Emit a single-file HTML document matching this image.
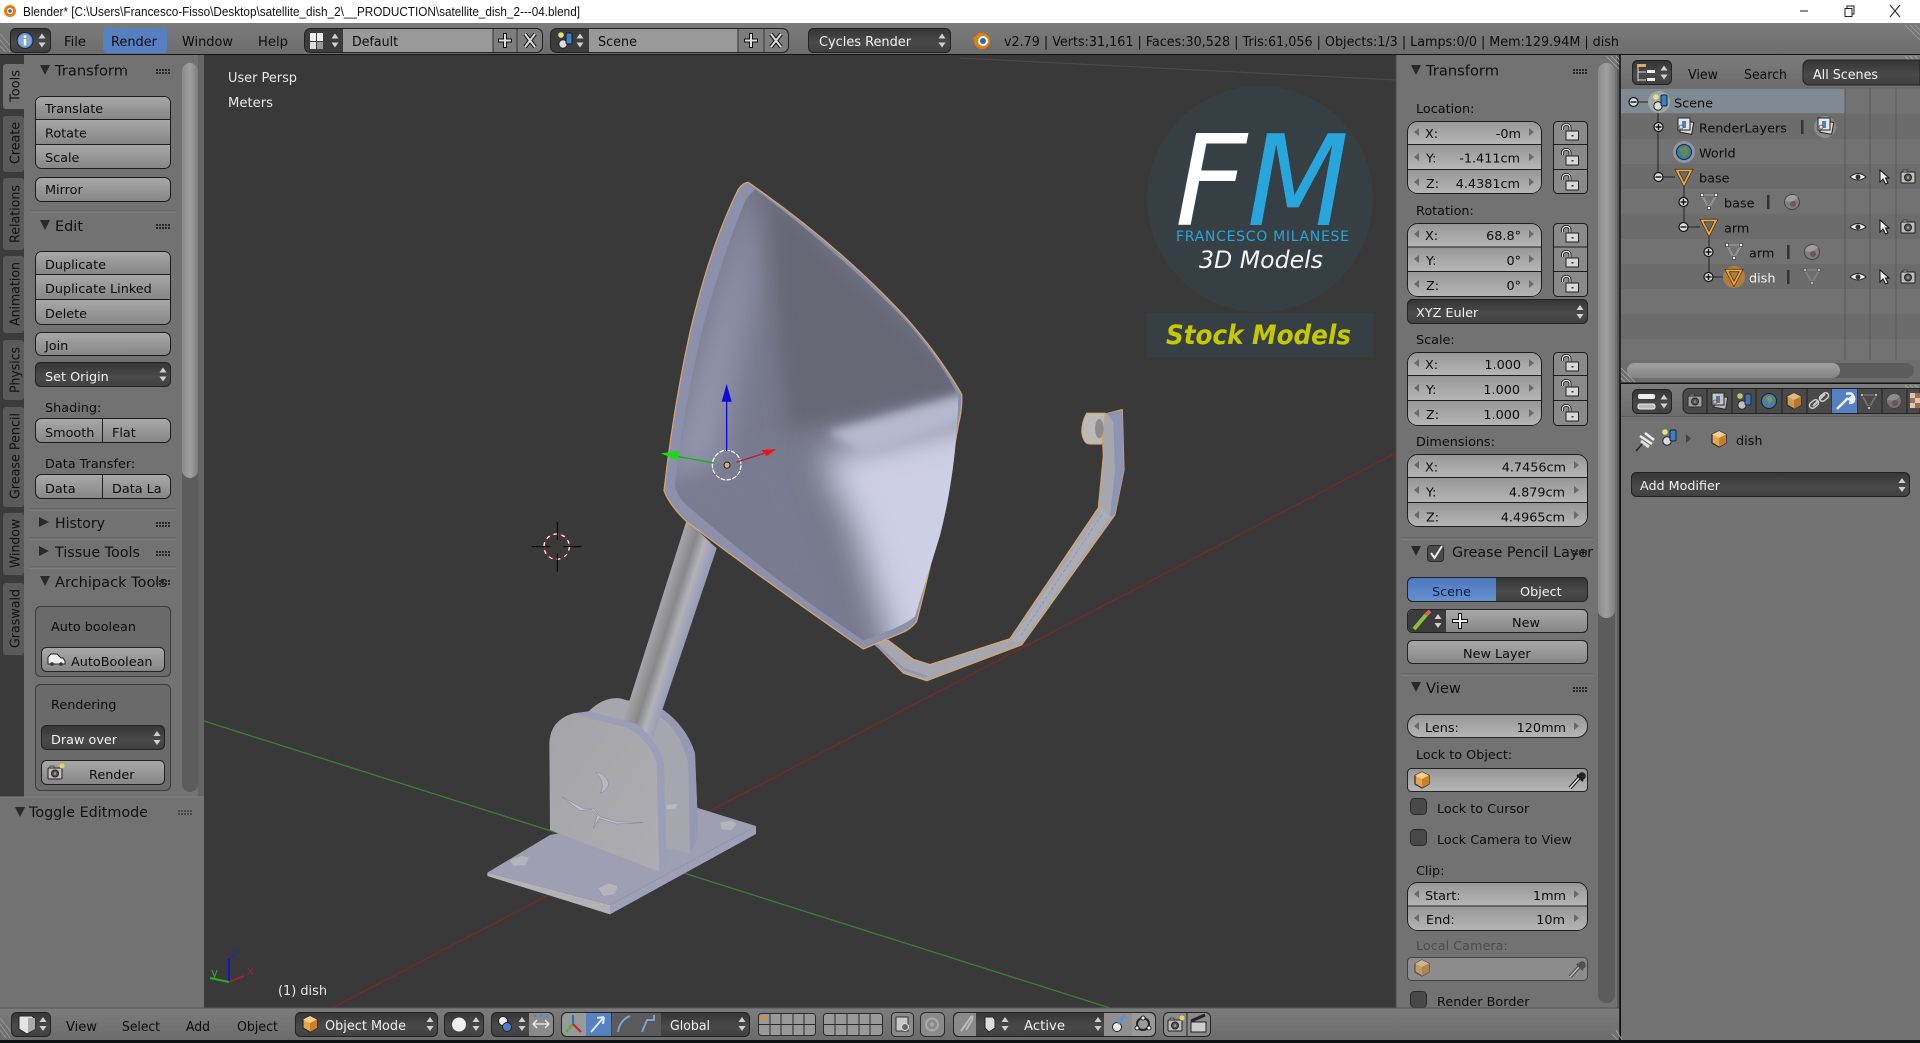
<!DOCTYPE html>
<html><head><meta charset="utf-8"><title>Blender</title>
<style>
html,body{margin:0;padding:0;background:#111;width:1920px;height:1043px;overflow:hidden}
svg{display:block}
text{font-family:"DejaVu Sans","Liberation Sans",sans-serif;font-size:12.8px;fill:#0b0b0b}
.w{fill:#f2f2f2}
.h{font-size:14px;fill:#101010}
.s{font-size:13px}
.tab{font-size:13px;fill:#111}
.g{stroke:#1c1c1c;fill:none}
</style></head><body>
<svg width="1920" height="1043" viewBox="0 0 1920 1043" xmlns="http://www.w3.org/2000/svg">
<defs>
<linearGradient id="b" x1="0" y1="0" x2="0" y2="1"><stop offset="0" stop-color="#a9a9a9"/><stop offset="1" stop-color="#868686"/></linearGradient>
<linearGradient id="n" x1="0" y1="0" x2="0" y2="1"><stop offset="0" stop-color="#969696"/><stop offset="1" stop-color="#b6b6b6"/></linearGradient>
<linearGradient id="d" x1="0" y1="0" x2="0" y2="1"><stop offset="0" stop-color="#353535"/><stop offset=".6" stop-color="#4a4a4a"/><stop offset="1" stop-color="#404040"/></linearGradient>
<linearGradient id="bl" x1="0" y1="0" x2="0" y2="1"><stop offset="0" stop-color="#4d78bd"/><stop offset="1" stop-color="#6490d0"/></linearGradient>
<linearGradient id="hd" x1="0" y1="0" x2="0" y2="1"><stop offset="0" stop-color="#7c7c7c"/><stop offset="1" stop-color="#6c6c6c"/></linearGradient>
<linearGradient id="sb" x1="0" y1="0" x2="1" y2="0"><stop offset="0" stop-color="#8a8a8a"/><stop offset=".5" stop-color="#a0a0a0"/><stop offset="1" stop-color="#7e7e7e"/></linearGradient>
<linearGradient id="sbh" x1="0" y1="0" x2="0" y2="1"><stop offset="0" stop-color="#a2a2a2"/><stop offset="1" stop-color="#848484"/></linearGradient>
<linearGradient id="pole" gradientUnits="userSpaceOnUse" x1="580" y1="365" x2="680" y2="397"><stop offset="0" stop-color="#a8a8ac"/><stop offset=".42" stop-color="#88888a"/><stop offset=".7" stop-color="#b2b2b8"/><stop offset="1" stop-color="#9a9db8"/></linearGradient>
<linearGradient id="plate" x1="0" y1="0" x2="1" y2="1"><stop offset="0" stop-color="#a4a4a8"/><stop offset="1" stop-color="#acacb2"/></linearGradient>
<filter id="f8" filterUnits="userSpaceOnUse" x="-300" y="-300" width="1900" height="2200"><feGaussianBlur stdDeviation="14"/></filter>
<filter id="f15" filterUnits="userSpaceOnUse" x="-300" y="-300" width="1900" height="2200"><feGaussianBlur stdDeviation="32"/></filter>
<filter id="f30" filterUnits="userSpaceOnUse" x="-300" y="-300" width="1900" height="2200"><feGaussianBlur stdDeviation="48"/></filter>
<clipPath id="dishc"><path d="M345 85Q600 270 800 470Q900 580 955 685Q950 900 900 1090L825 1325Q790 1355 670 1395Q400 1220 150 1010Q115 985 105 945Q130 720 190 480Q260 240 320 110Z"/></clipPath>
<clipPath id="c1"><rect x="35" y="96" width="136" height="73" rx="6"/></clipPath>
<clipPath id="c2"><rect x="35" y="251" width="136" height="74" rx="6"/></clipPath>
<clipPath id="c3"><rect x="1407" y="121" width="135" height="73" rx="10"/></clipPath>
<clipPath id="c4"><rect x="1407" y="223" width="135" height="74" rx="10"/></clipPath>
<clipPath id="c5"><rect x="1407" y="352" width="135" height="74" rx="10"/></clipPath>
<clipPath id="c6"><rect x="1407" y="454" width="181" height="73" rx="10"/></clipPath>
<clipPath id="c7"><rect x="1407" y="882" width="181" height="49" rx="10"/></clipPath>
<clipPath id="clipN"><rect x="1396" y="55" width="224" height="953"/></clipPath>
<g id="ud"><path d="M0-7L-3.500-2H3.500Z" fill="#d0d0d0"/><path d="M0 7L-3.500 2H3.500Z" fill="#d0d0d0"/></g>
<g id="grip" fill="#2a2a2a"><rect x="0" y="0" width="2" height="2"/><rect x="3" y="0" width="2" height="2"/><rect x="6" y="0" width="2" height="2"/><rect x="9" y="0" width="2" height="2"/><rect x="12" y="0" width="2" height="2"/><rect x="0" y="3" width="2" height="2"/><rect x="3" y="3" width="2" height="2"/><rect x="6" y="3" width="2" height="2"/><rect x="9" y="3" width="2" height="2"/><rect x="12" y="3" width="2" height="2"/></g>
<g id="lock"><path d="M-7.500-3V-5Q-7.500-8.500-3.500-8.500Q0-8.500 0-5V-2" fill="none" stroke="#111" stroke-width="2.800"/><path d="M-7.500-3V-5Q-7.500-8.500-3.500-8.500Q0-8.500 0-5V-2" fill="none" stroke="#e6e6e6" stroke-width="1.200"/><rect x="-4" y="-2" width="12.500" height="9" fill="#d8d8d8" stroke="#222"/><rect x="1.500" y="2" width="2" height="1.500" fill="#333"/></g>
<path id="al" d="M3-4V4L-2 0Z" fill="#6a6a6a"/>
<path id="ar" d="M-3-4V4L2 0Z" fill="#6a6a6a"/>
<g id="cube"><path d="M0-8L7-4.500V4L0 8L-7 4V-4.500Z" fill="#e8a550" stroke="#2a2a2a" stroke-width="1.200"/><path d="M0-8L7-4.500L0-1L-7-4.500Z" fill="#f6cf90"/><path d="M0-1L7-4.500V4L0 8Z" fill="#c97e28"/></g>
<g id="mesh"><path d="M-7-6H7L0 7Z" fill="none" stroke="#e8e8e8" stroke-width="1.300"/><path d="M-7-6H7L0 7Z" fill="none" stroke="#222" stroke-width=".5"/><rect x="-8.500" y="-7.500" width="3" height="3" fill="#fff" stroke="#222" stroke-width=".6"/><rect x="5.500" y="-7.500" width="3" height="3" fill="#fff" stroke="#222" stroke-width=".6"/><rect x="-1.500" y="5.500" width="3" height="3" fill="#fff" stroke="#222" stroke-width=".6"/></g>
<g id="obj"><path d="M-7-6.500H7L0 7Z" fill="none" stroke="#3a2a10" stroke-width="3.200"/><path d="M-7-6.500H7L0 7Z" fill="none" stroke="#f0a848" stroke-width="1.800"/></g>
<g id="exp"><circle r="4.500" fill="#dcdcdc" stroke="#111" stroke-width="1.200"/><path d="M-3 0H3" stroke="#111" stroke-width="1.400"/></g>
<g id="col"><circle r="4.500" fill="#dcdcdc" stroke="#111" stroke-width="1.200"/><path d="M-3 0H3M0-3V3" stroke="#111" stroke-width="1.400"/></g>
<g id="eye"><path d="M-8 0Q0-7 8 0Q0 6-8 0Z" fill="#eee" stroke="#222" stroke-width="1"/><circle r="2.500" fill="#333"/></g>
<path id="cur" d="M-4-7V5L-1 2L1.500 7L4 6L1.500 1L5 1Z" fill="#f0f0f0" stroke="#111" stroke-width="1"/>
<g id="cam"><rect x="-7" y="-5" width="14" height="11" rx="1" fill="#bdbdbd" stroke="#222"/><rect x="-5" y="-7" width="4" height="2" fill="#999" stroke="#222" stroke-width=".6"/><circle cy=".5" r="3.500" fill="#554" stroke="#222"/><circle cy=".5" r="1.300" fill="#a99"/></g>
<g id="scene"><circle cx="-3" cy="3" r="4.200" fill="#dedede" stroke="#222"/><rect x="0" y="-8" width="6" height="11" rx="1.500" fill="#3f7fc8" stroke="#123"/><circle cx="-5" cy="-6" r="2.800" fill="#e6e080"/></g>
<g id="rl"><rect x="-4" y="-5" width="12" height="12" fill="#d8d8d8" stroke="#222" transform="rotate(10)"/><rect x="-7" y="-8" width="12" height="12" fill="#e6e6e6" stroke="#222"/><rect x="-3" y="-5" width="4" height="7" fill="#4a80c8"/><circle cx="-4" cy="1" r="2" fill="#ddd" stroke="#333" stroke-width=".6"/></g>
<g id="mat"><circle r="7.500" fill="#8a7a7a" stroke="#444"/><path d="M-7-1A7.500 7.500 0 0 1 6-4.500L0 0Z" fill="#9e9e9e"/><circle cx="1" cy="2" r="3" fill="#6a5a5a"/></g>
<g id="drop"><path d="M-8 8L1-2" stroke="#111" stroke-width="3.600"/><path d="M-8 8L1-2" stroke="#e8e8e8" stroke-width="1.600"/><path d="M-1-5L5 1" stroke="#111" stroke-width="2"/><circle cx="4" cy="-4" r="3.800" fill="#222"/></g>
</defs>

<!-- base -->
<rect width="1920" height="1043" fill="#111"/>
<rect width="1920" height="23" fill="#fff"/>
<g transform="translate(10 11)"><circle r="6" fill="#e87d0d"/><circle r="3" fill="#fff"/><circle r="1.800" fill="#2a6bb0"/></g>
<text x="23" y="16" style="font-family:'Liberation Sans',sans-serif;font-size:13px;fill:#111" textLength="557" lengthAdjust="spacingAndGlyphs">Blender* [C:\Users\Francesco-Fisso\Desktop\satellite_dish_2\__PRODUCTION\satellite_dish_2---04.blend]</text>
<path d="M1800 11H1808" stroke="#222"/>
<path d="M1845 8.500h7v8h-7zM1847 8.500V6h7v8h-2" fill="none" stroke="#222"/>
<path d="M1890 5L1900 17M1900 5L1890 17" stroke="#222"/>

<!-- top header -->
<rect y="23" width="1920" height="32" fill="url(#hd)"/>
<rect y="54" width="1920" height="1.500" fill="#141414"/>
<path d="M0 34L14 50M0 40L10 52M0 46L6 52" stroke="#9a9a9a" stroke-width=".8"/>
<path d="M1905 25L1920 40M1910 25L1920 35M1915 25L1920 30" stroke="#9a9a9a" stroke-width=".8"/>
<rect x="10.500" y="28.500" width="40" height="24" rx="5" fill="url(#d)" stroke="#222"/>
<circle cx="25" cy="40.500" r="8" fill="#6f94c4" stroke="#142540"/><circle cx="25" cy="40.500" r="6" fill="#86a8d2"/><rect x="23.800" y="39" width="2.400" height="6.500" fill="#fff"/><rect x="23.800" y="35.500" width="2.400" height="2.200" fill="#fff"/>
<use href="#ud" x="42" y="40.500"/>
<text x="64" y="46" class="s" textLength="22" lengthAdjust="spacingAndGlyphs">File</text>
<rect x="103" y="28" width="64" height="25" rx="4" fill="#5680c2"/>
<text x="111" y="46" class="s" textLength="46" lengthAdjust="spacingAndGlyphs">Render</text>
<text x="182" y="46" class="s" textLength="51" lengthAdjust="spacingAndGlyphs">Window</text>
<text x="258" y="46" class="s" textLength="30" lengthAdjust="spacingAndGlyphs">Help</text>

<rect x="304.500" y="28.500" width="238" height="24" rx="6" fill="#3c3c3c" stroke="#222"/>
<rect x="343" y="29" width="150" height="23" fill="#999"/>
<rect x="493" y="29" width="24" height="23" fill="#7d7d7d"/><path d="M517 29h19a6 6 0 0 1 6 6v11a6 6 0 0 1-6 6h-19z" fill="#7d7d7d"/>
<path d="M493 29V52M517 29V52" stroke="#333"/>
<rect x="310" y="33" width="6" height="8" fill="#eee"/><rect x="317" y="33" width="6" height="8" fill="#eee"/><rect x="310" y="42" width="6" height="7" fill="#ddd"/><rect x="317" y="42" width="6" height="7" fill="#999"/>
<use href="#ud" x="335" y="40.500"/>
<text x="352" y="46" class="s" textLength="46" lengthAdjust="spacingAndGlyphs">Default</text>
<path d="M505 33V48M498 40.500H512" stroke="#111" stroke-width="4"/><path d="M505 34V47M499 40.500H511" stroke="#ddd" stroke-width="2"/>
<path d="M525 34L535 47M535 34L525 47" stroke="#111" stroke-width="4"/><path d="M525 34L535 47M535 34L525 47" stroke="#ddd" stroke-width="2"/>

<rect x="550.500" y="28.500" width="238" height="24" rx="6" fill="#3c3c3c" stroke="#222"/>
<rect x="589" y="29" width="149" height="23" fill="#999"/>
<rect x="738" y="29" width="26" height="23" fill="#7d7d7d"/><path d="M764 29h18a6 6 0 0 1 6 6v11a6 6 0 0 1-6 6h-18z" fill="#7d7d7d"/>
<path d="M738 29V52M764 29V52" stroke="#333"/>
<use href="#scene" x="566" y="41"/><use href="#ud" x="580" y="40.500"/>
<text x="598" y="46" class="s" textLength="39" lengthAdjust="spacingAndGlyphs">Scene</text>
<path d="M751 33V48M744 40.500H758" stroke="#111" stroke-width="4"/><path d="M751 34V47M745 40.500H757" stroke="#ddd" stroke-width="2"/>
<path d="M771 34L781 47M781 34L771 47" stroke="#111" stroke-width="4"/><path d="M771 34L781 47M781 34L771 47" stroke="#ddd" stroke-width="2"/>

<rect x="808.500" y="28.500" width="142" height="24" rx="5" fill="url(#d)" stroke="#222"/>
<text x="819" y="46" class="w s" textLength="92" lengthAdjust="spacingAndGlyphs">Cycles Render</text>
<use href="#ud" x="942" y="40.500"/>

<g transform="translate(982 41)"><circle r="8" fill="#e87d0d"/><path d="M-11-1L-3-8L-1-9L-4-4Z" fill="#e87d0d"/><circle cx="1" r="5" fill="#fff"/><circle cx="1" r="3" fill="#2a6bb0"/></g>
<text x="1004" y="46" class="s" textLength="615" lengthAdjust="spacingAndGlyphs">v2.79 | Verts:31,161 | Faces:30,528 | Tris:61,056 | Objects:1/3 | Lamps:0/0 | Mem:129.94M | dish</text>

<!-- viewport -->
<rect x="204" y="55" width="1192" height="953" fill="#393939"/>
<path d="M960 58L1396 80" stroke="#4c4c4c"/>
<path d="M204 721L1110 1008" stroke="#3f7a3f" stroke-width="1.300"/>
<path d="M1396 453L332 1008" stroke="#6b2d2d" stroke-width="1.600"/>

<!-- logo -->
<circle cx="1260" cy="199" r="113" fill="#364044"/>
<rect x="1147" y="313" width="226" height="44" fill="#364044"/>
<text x="1175" y="225" style="font-size:126px;font-style:italic;fill:#fff" textLength="72" lengthAdjust="spacingAndGlyphs">F</text>
<text x="1247" y="225" style="font-size:126px;font-style:italic;fill:#27a5dc" textLength="102" lengthAdjust="spacingAndGlyphs">M</text>
<text x="1176" y="241" style="font-size:14px;fill:#27a5dc" textLength="173">FRANCESCO MILANESE</text>
<text x="1199" y="268" style="font-size:24px;font-style:italic;fill:#f4f4f4" textLength="124" lengthAdjust="spacingAndGlyphs">3D Models</text>
<text x="1166" y="344" style="font-size:27px;font-style:italic;font-weight:bold;fill:#c8c800" textLength="185" lengthAdjust="spacingAndGlyphs">Stock Models</text>

<text x="228" y="82" class="w s" style="fill:#e8e8e8" textLength="69" lengthAdjust="spacingAndGlyphs">User Persp</text>
<text x="228" y="107" class="w s" style="fill:#e8e8e8" textLength="45" lengthAdjust="spacingAndGlyphs">Meters</text>
<text x="278" y="995" class="w s" style="fill:#e8e8e8" textLength="49" lengthAdjust="spacingAndGlyphs">(1) dish</text>

<!-- axis gizmo -->
<path d="M229 982V958" stroke="#1414c8" stroke-width="2"/>
<path d="M229 982L244 976" stroke="#a82030" stroke-width="2"/>
<path d="M229 982L210 978" stroke="#20b020" stroke-width="2"/>
<text x="231" y="958" style="font-size:12px;fill:#1c2cb0">z</text>
<text x="247" y="975" style="font-size:12px;fill:#a02030">x</text>
<text x="211" y="977" style="font-size:12px;fill:#40a040">y</text>

<!-- 3D cursor + mount -->
<g transform="translate(460 500) scale(.33333)">
<circle cx="290" cy="140" r="38" fill="none" stroke="#fff" stroke-width="4" stroke-dasharray="12 12"/>
<circle cx="290" cy="140" r="38" fill="none" stroke="#9a1a2a" stroke-width="4" stroke-dasharray="12 12" stroke-dashoffset="12"/>
<path d="M215 140H270M310 140H365M292 65V120M292 160V215" stroke="#000" stroke-width="3"/>

<path d="M82 1118L270 1005L700 920L888 978L450 1215Z" fill="#9e9fb2"/>
<path d="M82 1118L450 1215V1243L82 1128Z" fill="#b2b2b8"/>
<path d="M450 1215L888 978V1002L450 1243Z" fill="#9ea0b8"/>
<path d="M150 1080L185 1068L207 1072L195 1095L160 1098Z" fill="#b4b4ba"/>
<path d="M780 968L815 962L830 972L815 990L785 988Z" fill="#b4b4ba"/>
<path d="M415 1165L445 1150L472 1158L465 1182L430 1188Z" fill="#b4b4ba"/>
<!-- back plate -->
<path d="M385 635Q430 590 480 595L610 630Q680 680 705 760L715 1010L690 1060L560 1030L560 700Z" fill="#a6a6ae"/>
<path d="M610 630Q680 680 705 760L715 1010L690 1060L685 790Q660 690 600 650Z" fill="#9698b4"/>
<path d="M618 915L650 912L648 925L620 928Z" fill="#b9b9c2"/>
<!-- pole -->
<path d="M680 60L770 145L580 710L490 660Z" fill="url(#pole)"/>
<!-- front plate -->
<path d="M268 730Q270 660 340 640L360 638L500 680Q570 720 590 790L598 1115L270 990Z" fill="url(#plate)"/>
<path d="M340 640L385 634L530 672Q600 730 612 790L620 1095L598 1115L590 790Q570 720 500 682L360 648Z" fill="#9c9eb8"/>
<path d="M408 818Q432 815 447 850Q440 875 420 880Q438 850 408 818Z" fill="#b8b8c2" stroke="#808090" stroke-width="1.500"/>
<path d="M305 890L360 932L395 928L412 945L400 985L418 955L470 972L550 968L470 965L420 950L400 925L370 925Z" fill="#bdbdc6" stroke="#858595" stroke-width="1.500"/>
</g>

<!-- arm and dish -->
<g transform="translate(640 160) scale(.33333 .34439)">
<path d="M700 1400L790 1490L860 1512L1145 1408L1425 1030L1452 900L1447 725L1385 740L1390 860L1375 1010L1110 1390L870 1465L820 1450L745 1395Z" fill="#a6a7ae" stroke="#d9a468" stroke-width="3.500"/>
<path d="M1400 735L1447 727L1452 900L1425 1030L1410 1035L1425 900L1420 760Z" fill="#9094b2"/>
<path d="M1390 1010L1410 1035L1145 1400L1115 1395Z" fill="#aaacb6"/>
<path d="M1385 1030L1140 1385" stroke="#8c96b4" stroke-width="2.500" stroke-dasharray="10 6"/>
<path d="M1340 735Q1325 760 1325 790Q1330 825 1350 825L1385 825L1395 735Z" fill="#bcbab6" stroke="#d9a468" stroke-width="3"/>
<ellipse cx="1378" cy="780" rx="13" ry="28" fill="#8c8c90"/>
<path d="M700 1400L790 1478L860 1500" fill="none" stroke="#9397ae" stroke-width="8"/>
<path d="M325 65Q600 250 800 460Q900 570 965 680Q968 720 955 770Q900 1080 830 1340Q810 1365 780 1375L670 1420Q400 1240 140 1050Q90 1005 72 960Q100 720 150 500Q210 250 295 85Q310 65 325 65Z" fill="#8d90ab" stroke="#dba768" stroke-width="3.500"/>
<g clip-path="url(#dishc)">
<rect x="0" y="0" width="1100" height="1500" fill="#77798c"/>
<path d="M345 40L1030 680L440 790L400 420Z" fill="#666876" filter="url(#f15)"/>
<path d="M345 60L60 950L230 900L330 380Z" fill="#9496ae" filter="url(#f30)"/>
<path d="M420 820L590 1300L650 1420L130 1030L90 950L260 900Z" fill="#797b91" filter="url(#f15)"/>
<path d="M540 860L1150 720L1150 1550L800 1550L640 1060Z" fill="#cdcfe4" filter="url(#f30)"/>
<path d="M560 790L985 675L985 755L680 860Z" fill="#b6b8ce" filter="url(#f8)"/>
</g>
<!-- gizmo -->
<circle cx="260" cy="886" r="43" fill="none" stroke="#fff" stroke-width="3.500" stroke-dasharray="14 4"/>
<circle cx="261" cy="886" r="9" fill="#d8a878" stroke="#222" stroke-width="3"/>
<path d="M260 845V700" stroke="#0c0cd8" stroke-width="4"/>
<path d="M260 650L245 702H275Z" fill="#0c0cd8"/>
<path d="M290 877L372 852" stroke="#b82040" stroke-width="4"/>
<path d="M365 842L408 840L380 860Z" fill="#f01010"/>
<path d="M220 880L110 860" stroke="#18b018" stroke-width="4"/>
<path d="M62 852L115 845V872Z" fill="#12e012"/>
</g>

<!-- T panel -->
<rect x="0" y="55" width="204" height="743" fill="#727272"/>
<rect x="0" y="55" width="24" height="743" fill="#3b3b3b"/>
<rect x="198" y="55" width="6" height="743" fill="#656565"/>
<rect x="3" y="116" width="21" height="56" rx="3" fill="#5a5a5a"/>
<rect x="3" y="178" width="21" height="72" rx="3" fill="#5a5a5a"/>
<rect x="3" y="256" width="21" height="77" rx="3" fill="#5a5a5a"/>
<rect x="3" y="340" width="21" height="60" rx="3" fill="#5a5a5a"/>
<rect x="3" y="407" width="21" height="100" rx="3" fill="#5a5a5a"/>
<rect x="3" y="513" width="21" height="62" rx="3" fill="#5a5a5a"/>
<rect x="3" y="583" width="21" height="72" rx="3" fill="#5a5a5a"/>
<rect x="3" y="64" width="24" height="45" rx="3" fill="#727272"/>
<text class="tab" transform="translate(19.500 102) rotate(-90)" textLength="32" lengthAdjust="spacingAndGlyphs">Tools</text>
<text class="tab" transform="translate(19.500 164) rotate(-90)" textLength="42" lengthAdjust="spacingAndGlyphs">Create</text>
<text class="tab" transform="translate(19.500 243) rotate(-90)" textLength="58" lengthAdjust="spacingAndGlyphs">Relations</text>
<text class="tab" transform="translate(19.500 326) rotate(-90)" textLength="64" lengthAdjust="spacingAndGlyphs">Animation</text>
<text class="tab" transform="translate(19.500 393) rotate(-90)" textLength="46" lengthAdjust="spacingAndGlyphs">Physics</text>
<text class="tab" transform="translate(19.500 499) rotate(-90)" textLength="86" lengthAdjust="spacingAndGlyphs">Grease Pencil</text>
<text class="tab" transform="translate(19.500 568) rotate(-90)" textLength="49" lengthAdjust="spacingAndGlyphs">Window</text>
<text class="tab" transform="translate(19.500 648) rotate(-90)" textLength="59" lengthAdjust="spacingAndGlyphs">Graswald</text>
<rect x="182" y="63" width="16" height="729" rx="8" fill="#5c5c5c"/>
<rect x="182" y="63" width="16" height="415" rx="8" fill="url(#sb)"/>
<path d="M40 65L50 65L45 75Z" fill="#2a2a2a"/><text x="55" y="75.500" class="h" textLength="73" lengthAdjust="spacingAndGlyphs">Transform</text><use href="#grip" x="156" y="69"/>
<g clip-path="url(#c1)"><rect x="35" y="96" width="136" height="23" fill="url(#b)"/><rect x="35" y="119" width="136" height="25" fill="url(#b)"/><rect x="35" y="144" width="136" height="25" fill="url(#b)"/></g>
<rect x="35.500" y="96.500" width="135" height="72" rx="6" class="g"/><path d="M36 119.500H170M36 144.500H170" stroke="#1c1c1c"/>
<text x="45" y="113">Translate</text><text x="45" y="137.500">Rotate</text><text x="45" y="162">Scale</text>
<rect x="35.500" y="177.500" width="135" height="24" rx="6" fill="url(#b)" stroke="#1c1c1c"/><text x="45" y="194">Mirror</text>
<path d="M30 211H176" stroke="#5a5a5a"/><path d="M30 212H176" stroke="#858585"/>
<path d="M40 220L50 220L45 230Z" fill="#2a2a2a"/><text x="55" y="231" class="h" textLength="28" lengthAdjust="spacingAndGlyphs">Edit</text><use href="#grip" x="156" y="224"/>
<g clip-path="url(#c2)"><rect x="35" y="251" width="136" height="23" fill="url(#b)"/><rect x="35" y="274" width="136" height="25" fill="url(#b)"/><rect x="35" y="299" width="136" height="26" fill="url(#b)"/></g>
<rect x="35.500" y="251.500" width="135" height="73" rx="6" class="g"/><path d="M36 274.500H170M36 299.500H170" stroke="#1c1c1c"/>
<text x="45" y="269">Duplicate</text><text x="45" y="293">Duplicate Linked</text><text x="45" y="318">Delete</text>
<rect x="35.500" y="332.500" width="135" height="23" rx="6" fill="url(#b)" stroke="#1c1c1c"/><text x="45" y="350">Join</text>
<rect x="35.500" y="362.500" width="135" height="24" rx="5" fill="url(#d)" stroke="#222"/><text x="45" y="381" class="w">Set Origin</text><use href="#ud" x="163" y="374.500"/>
<text x="45" y="412">Shading:</text>
<rect x="35.500" y="418.500" width="135" height="24" rx="6" fill="url(#b)" stroke="#1c1c1c"/><path d="M102.500 419V442" stroke="#1c1c1c"/><text x="45" y="437">Smooth</text><text x="112" y="437">Flat</text>
<text x="45" y="468">Data Transfer:</text>
<rect x="35.500" y="474.500" width="135" height="24" rx="6" fill="url(#b)" stroke="#1c1c1c"/><path d="M102.500 475V498" stroke="#1c1c1c"/><text x="45" y="493">Data</text><text x="112" y="493">Data La</text>
<path d="M30 509H176" stroke="#5a5a5a"/><path d="M30 510H176" stroke="#858585"/>
<path d="M39 517L49 522L39 527Z" fill="#2a2a2a"/><text x="55" y="528" class="h" textLength="50" lengthAdjust="spacingAndGlyphs">History</text><use href="#grip" x="156" y="522"/>
<path d="M30 538H176" stroke="#5a5a5a"/><path d="M30 539H176" stroke="#858585"/>
<path d="M39 546L49 551L39 556Z" fill="#2a2a2a"/><text x="55" y="557" class="h" textLength="85" lengthAdjust="spacingAndGlyphs">Tissue Tools</text><use href="#grip" x="156" y="551"/>
<path d="M30 567H176" stroke="#5a5a5a"/><path d="M30 568H176" stroke="#858585"/>
<path d="M40 576L50 576L45 586Z" fill="#2a2a2a"/><text x="55" y="587" class="h" textLength="112" lengthAdjust="spacingAndGlyphs">Archipack Tools</text><use href="#grip" x="156" y="580"/>
<rect x="35.500" y="606.500" width="135" height="70" rx="5" fill="#6a6a6a" stroke="#3c3c3c"/>
<text x="51" y="631">Auto boolean</text>
<rect x="41.500" y="647.500" width="123" height="24" rx="5" fill="url(#b)" stroke="#222"/>
<path d="M48 664V657L51 654H57L61 658H63L65 661V664Z" fill="#eee" stroke="#222"/><circle cx="52" cy="664" r="1.800" fill="#333"/><circle cx="61" cy="664" r="1.800" fill="#333"/>
<text x="71" y="666">AutoBoolean</text>
<rect x="35.500" y="684.500" width="135" height="106" rx="5" fill="#6a6a6a" stroke="#3c3c3c"/>
<text x="51" y="709">Rendering</text>
<rect x="41.500" y="725.500" width="123" height="24" rx="5" fill="url(#d)" stroke="#222"/><text x="51" y="744" class="w">Draw over</text><use href="#ud" x="157" y="738"/>
<rect x="41.500" y="760.500" width="123" height="24" rx="5" fill="url(#b)" stroke="#222"/>
<use href="#cam" x="55" y="773"/><circle cx="62" cy="766" r="2.500" fill="#eed25a"/>
<text x="89" y="779">Render</text>
<rect x="0" y="797" width="204" height="212" fill="#727272"/>
<path d="M0 797H204" stroke="#7e7e7e"/>
<path d="M15 807L25 807L20 817Z" fill="#2a2a2a"/><text x="29" y="817" class="h" textLength="119" lengthAdjust="spacingAndGlyphs">Toggle Editmode</text>
<use href="#grip" x="178" y="810" opacity=".55"/>

<!-- N panel -->
<rect x="1396" y="55" width="224" height="953" fill="#727272"/>
<path d="M1396 55V1008" stroke="#4a4a4a"/>
<rect x="1617" y="55" width="3" height="953" fill="#5c5c5c"/>
<rect x="1598" y="63" width="17" height="940" rx="8" fill="#5c5c5c"/>
<rect x="1598" y="63" width="17" height="555" rx="8" fill="url(#sb)"/>
<path d="M1606 56L1620 70M1611 56L1620 65M1616 56L1620 60" stroke="#aaa" stroke-width=".8"/>
<g clip-path="url(#clipN)">
<path d="M1411 65L1421 65L1416 75Z" fill="#2a2a2a"/><text x="1426" y="75.500" class="h" textLength="73" lengthAdjust="spacingAndGlyphs">Transform</text><use href="#grip" x="1573" y="69"/>
<text x="1416" y="113">Location:</text>
<g clip-path="url(#c3)"><rect x="1407" y="121" width="135" height="23" fill="url(#n)"/><rect x="1407" y="144" width="135" height="25" fill="url(#n)"/><rect x="1407" y="169" width="135" height="25" fill="url(#n)"/></g>
<rect x="1407.500" y="121.500" width="134" height="72" rx="10" class="g"/><path d="M1408 144.500H1541M1408 169.500H1541" stroke="#1c1c1c"/>
<use href="#al" x="1416" y="132"/><use href="#ar" x="1532" y="132"/><use href="#al" x="1416" y="157"/><use href="#ar" x="1532" y="157"/><use href="#al" x="1416" y="182"/><use href="#ar" x="1532" y="182"/>
<text x="1425" y="138">X:</text><text x="1521" y="138" text-anchor="end">-0m</text>
<text x="1426" y="162.500">Y:</text><text x="1520" y="162.500" text-anchor="end">-1.411cm</text>
<text x="1426" y="188">Z:</text><text x="1520" y="188" text-anchor="end">4.4381cm</text>
<rect x="1553.500" y="121.500" width="34" height="72" rx="4" fill="#8a8a8a" stroke="#1c1c1c"/><path d="M1554 144.500H1587M1554 169.500H1587" stroke="#1c1c1c"/>
<use href="#lock" x="1570" y="133"/><use href="#lock" x="1570" y="158"/><use href="#lock" x="1570" y="183"/>

<text x="1416" y="215">Rotation:</text>
<g clip-path="url(#c4)"><rect x="1407" y="223" width="135" height="24" fill="url(#n)"/><rect x="1407" y="247" width="135" height="24" fill="url(#n)"/><rect x="1407" y="271" width="135" height="26" fill="url(#n)"/></g>
<rect x="1407.500" y="223.500" width="134" height="73" rx="10" class="g"/><path d="M1408 247H1541M1408 271.500H1541" stroke="#1c1c1c"/>
<use href="#al" x="1416" y="234"/><use href="#ar" x="1532" y="234"/><use href="#al" x="1416" y="259"/><use href="#ar" x="1532" y="259"/><use href="#al" x="1416" y="284"/><use href="#ar" x="1532" y="284"/>
<text x="1425" y="240">X:</text><text x="1521" y="240" text-anchor="end">68.8°</text>
<text x="1426" y="265">Y:</text><text x="1521" y="265" text-anchor="end">0°</text>
<text x="1426" y="290">Z:</text><text x="1521" y="290" text-anchor="end">0°</text>
<rect x="1553.500" y="223.500" width="34" height="73" rx="4" fill="#8a8a8a" stroke="#1c1c1c"/><path d="M1554 247H1587M1554 271.500H1587" stroke="#1c1c1c"/>
<use href="#lock" x="1570" y="235"/><use href="#lock" x="1570" y="260"/><use href="#lock" x="1570" y="285"/>
<rect x="1407.500" y="299.500" width="180" height="24" rx="5" fill="url(#d)" stroke="#222"/><text x="1416" y="317" class="w">XYZ Euler</text><use href="#ud" x="1580" y="312"/>

<text x="1416" y="344">Scale:</text>
<g clip-path="url(#c5)"><rect x="1407" y="352" width="135" height="23" fill="url(#n)"/><rect x="1407" y="375" width="135" height="25" fill="url(#n)"/><rect x="1407" y="400" width="135" height="26" fill="url(#n)"/></g>
<rect x="1407.500" y="352.500" width="134" height="73" rx="10" class="g"/><path d="M1408 375.500H1541M1408 400.500H1541" stroke="#1c1c1c"/>
<use href="#al" x="1416" y="363"/><use href="#ar" x="1532" y="363"/><use href="#al" x="1416" y="388"/><use href="#ar" x="1532" y="388"/><use href="#al" x="1416" y="413"/><use href="#ar" x="1532" y="413"/>
<text x="1425" y="369">X:</text><text x="1521" y="369" text-anchor="end">1.000</text>
<text x="1426" y="394">Y:</text><text x="1520" y="394" text-anchor="end">1.000</text>
<text x="1426" y="419">Z:</text><text x="1520" y="419" text-anchor="end">1.000</text>
<rect x="1553.500" y="352.500" width="34" height="73" rx="4" fill="#8a8a8a" stroke="#1c1c1c"/><path d="M1554 375.500H1587M1554 400.500H1587" stroke="#1c1c1c"/>
<use href="#lock" x="1570" y="364"/><use href="#lock" x="1570" y="389"/><use href="#lock" x="1570" y="414"/>

<text x="1416" y="446">Dimensions:</text>
<g clip-path="url(#c6)"><rect x="1407" y="454" width="181" height="23" fill="url(#n)"/><rect x="1407" y="477" width="181" height="26" fill="url(#n)"/><rect x="1407" y="503" width="181" height="24" fill="url(#n)"/></g>
<rect x="1407.500" y="454.500" width="180" height="72" rx="10" class="g"/><path d="M1408 477.500H1587M1408 502.500H1587" stroke="#1c1c1c"/>
<use href="#al" x="1416" y="465"/><use href="#ar" x="1577" y="465"/><use href="#al" x="1416" y="490"/><use href="#ar" x="1577" y="490"/><use href="#al" x="1416" y="515"/><use href="#ar" x="1577" y="515"/>
<text x="1425" y="471.500">X:</text><text x="1566" y="471.500" text-anchor="end">4.7456cm</text>
<text x="1426" y="496.500">Y:</text><text x="1565" y="496.500" text-anchor="end">4.879cm</text>
<text x="1426" y="521.500">Z:</text><text x="1565" y="521.500" text-anchor="end">4.4965cm</text>
<path d="M1401 538H1593" stroke="#5a5a5a"/><path d="M1401 539H1593" stroke="#858585"/>

<path d="M1411 546L1421 546L1416 556Z" fill="#2a2a2a"/>
<rect x="1427.500" y="545.500" width="16" height="16" rx="3" fill="#4a4a4a" stroke="#2a2a2a"/><path d="M1431 553L1434.500 558L1442 546" fill="none" stroke="#eee" stroke-width="2"/>
<text x="1452" y="557" class="h" textLength="141" lengthAdjust="spacingAndGlyphs">Grease Pencil Layer</text><use href="#grip" x="1573" y="550"/>
<rect x="1407.500" y="577.500" width="180" height="24" rx="5" fill="url(#d)" stroke="#222"/>
<path d="M1496 578H1413a5 5 0 0 0-5 5v13a5 5 0 0 0 5 5h83z" fill="url(#bl)"/>
<text x="1432" y="596" style="fill:#071c3a">Scene</text><text x="1520" y="596" class="w">Object</text>
<rect x="1407.500" y="609.500" width="180" height="23" rx="5" fill="url(#b)" stroke="#222"/>
<path d="M1446 610H1413a5 5 0 0 0-5 5v12a5 5 0 0 0 5 5h33z" fill="#3c3c3c"/>
<path d="M1414 629L1426 615" stroke="#8abf3a" stroke-width="4"/><path d="M1426 615L1430 611" stroke="#e06060" stroke-width="4"/><use href="#ud" x="1438" y="621"/>
<path d="M1460 613V629M1452 621H1468" stroke="#111" stroke-width="4"/><path d="M1460 614V628M1453 621H1467" stroke="#eee" stroke-width="2"/>
<text x="1512" y="627">New</text>
<rect x="1407.500" y="640.500" width="180" height="23" rx="5" fill="url(#b)" stroke="#222"/><text x="1463" y="658">New Layer</text>
<path d="M1401 674H1593" stroke="#5a5a5a"/><path d="M1401 675H1593" stroke="#858585"/>
<path d="M1411 682L1421 682L1416 692Z" fill="#2a2a2a"/><text x="1426" y="693" class="h" textLength="35" lengthAdjust="spacingAndGlyphs">View</text><use href="#grip" x="1573" y="687"/>
<rect x="1407.500" y="714.500" width="180" height="23" rx="11" fill="url(#n)" stroke="#222"/>
<use href="#al" x="1416" y="726"/><use href="#ar" x="1577" y="726"/>
<text x="1425" y="732">Lens:</text><text x="1566" y="732" text-anchor="end">120mm</text>
<text x="1416" y="759">Lock to Object:</text>
<rect x="1407.500" y="768.500" width="180" height="23" rx="4" fill="url(#n)" stroke="#222"/>
<use href="#cube" x="1422" y="780"/>
<use href="#drop" x="1578" y="780"/>
<rect x="1410.500" y="798.500" width="16" height="16" rx="4" fill="#484848" stroke="#2a2a2a"/><text x="1437" y="813">Lock to Cursor</text>
<rect x="1410.500" y="829.500" width="16" height="16" rx="4" fill="#484848" stroke="#2a2a2a"/><text x="1437" y="844">Lock Camera to View</text>
<text x="1416" y="875">Clip:</text>
<g clip-path="url(#c7)"><rect x="1407" y="882" width="181" height="24" fill="url(#n)"/><rect x="1407" y="906" width="181" height="25" fill="url(#n)"/></g>
<rect x="1407.500" y="882.500" width="180" height="48" rx="10" class="g"/><path d="M1408 906H1587" stroke="#1c1c1c"/>
<use href="#al" x="1416" y="894"/><use href="#ar" x="1577" y="894"/><use href="#al" x="1416" y="918"/><use href="#ar" x="1577" y="918"/>
<text x="1425" y="900">Start:</text><text x="1566" y="900" text-anchor="end">1mm</text>
<text x="1426" y="924">End:</text><text x="1565" y="924" text-anchor="end">10m</text>
<text x="1416" y="950" style="fill:#4c4c4c">Local Camera:</text>
<rect x="1407.500" y="957.500" width="180" height="23" rx="4" fill="#8c8c8c" stroke="#444"/>
<use href="#cube" x="1422" y="968" opacity=".6"/>
<use href="#drop" x="1578" y="969" opacity=".55"/>
<rect x="1410.500" y="991.500" width="16" height="16" rx="4" fill="#484848" stroke="#2a2a2a"/><text x="1437" y="1006">Render Border</text>
</g>

<!-- bottom header -->
<rect x="0" y="1008" width="1620" height="32" fill="url(#hd)"/>
<path d="M0 1008H1620" stroke="#555"/>
<path d="M0 1018L14 1036M0 1024L10 1038M0 1030L6 1038" stroke="#9a9a9a" stroke-width=".8"/>
<rect x="11.500" y="1012.500" width="39" height="24" rx="5" fill="url(#d)" stroke="#222"/>
<path d="M19 1016L32 1016L35 1019V1029L27 1034L19 1029Z" fill="#e4e4e4" stroke="#222"/><path d="M28 1018L35 1018V1029L28 1033Z" fill="#aaa"/><use href="#ud" x="43" y="1024"/>
<text x="66" y="1031" class="s" textLength="31" lengthAdjust="spacingAndGlyphs">View</text>
<text x="122" y="1031" class="s" textLength="38" lengthAdjust="spacingAndGlyphs">Select</text>
<text x="186" y="1031" class="s" textLength="24" lengthAdjust="spacingAndGlyphs">Add</text>
<text x="237" y="1031" class="s" textLength="41" lengthAdjust="spacingAndGlyphs">Object</text>
<rect x="295.500" y="1012.500" width="142" height="24" rx="5" fill="url(#d)" stroke="#222"/>
<use href="#cube" x="310" y="1024"/><text x="325" y="1030" class="w s" textLength="81" lengthAdjust="spacingAndGlyphs">Object Mode</text><use href="#ud" x="430" y="1024"/>
<rect x="444.500" y="1012.500" width="39" height="24" rx="5" fill="url(#d)" stroke="#222"/><circle cx="459" cy="1024.500" r="7" fill="#f0f0f0"/><use href="#ud" x="476" y="1024"/>
<rect x="491.500" y="1012.500" width="62" height="24" rx="5" fill="url(#d)" stroke="#222"/>
<path d="M529 1013h19a5 5 0 0 1 5 5v13a5 5 0 0 1-5 5h-19z" fill="#8a8a8a"/>
<circle cx="503" cy="1021" r="4.500" fill="#eee" stroke="#222"/><circle cx="507" cy="1027" r="4.500" fill="#4a80c8" stroke="#222"/><use href="#ud" x="522" y="1024"/>
<path d="M533 1024H549M533 1024L537 1020M533 1024L537 1028M549 1024L545 1020M549 1024L545 1028" stroke="#eee" fill="none" stroke-width="1.300"/>
<circle cx="535" cy="1016" r="1.300" fill="#5a80c0"/><circle cx="541" cy="1016" r="1.300" fill="#5a80c0"/><circle cx="547" cy="1016" r="1.300" fill="#5a80c0"/>
<rect x="561.500" y="1012.500" width="188" height="24" rx="5" fill="url(#d)" stroke="#222"/>
<path d="M562 1018a5 5 0 0 1 5-5h19v23h-19a5 5 0 0 1-5-5z" fill="#999"/>
<rect x="586" y="1013" width="25" height="23" fill="#5680c2"/><rect x="612" y="1013" width="24" height="23" fill="#5a5a5a"/><rect x="636" y="1013" width="25" height="23" fill="#5a5a5a"/>
<path d="M573 1024L573 1015" stroke="#2a6ad0" stroke-width="2"/><path d="M573 1024L566 1032" stroke="#50b020" stroke-width="2"/><path d="M573 1024L581 1032" stroke="#d02020" stroke-width="2"/>
<path d="M591 1032L604 1017M604 1017L597 1018M604 1017L603 1024" stroke="#dfe8f6" stroke-width="2" fill="none"/>
<path d="M618 1032Q620 1020 630 1016" stroke="#7fa0d8" stroke-width="2" fill="none"/>
<path d="M642 1032L647 1020H654V1015" stroke="#7fa0d8" stroke-width="2" fill="none"/>
<text x="670" y="1030" class="w s" textLength="40" lengthAdjust="spacingAndGlyphs">Global</text><use href="#ud" x="742" y="1024"/>
<g fill="#999" stroke="#2a2a2a"><rect x="758.500" y="1013.500" width="57" height="22" rx="3"/><rect x="823.500" y="1013.500" width="59" height="22" rx="3"/><rect x="891.500" y="1012.500" width="22" height="24" rx="4" fill="#8a8a8a"/><rect x="920.500" y="1012.500" width="24" height="24" rx="5" fill="#8a8a8a"/></g>
<path d="M758 1024.500H815M823 1024.500H882M770 1014V1035M781 1014V1035M793 1014V1035M804 1014V1035M835 1014V1035M847 1014V1035M859 1014V1035M870 1014V1035" stroke="#2a2a2a"/>
<circle cx="763" cy="1018" r="2.500" fill="#e08a30"/>
<rect x="896" y="1017" width="12" height="14" fill="#c8c8c8" stroke="#333"/><circle cx="905" cy="1027" r="3.500" fill="#666" stroke="#ddd"/>
<circle cx="932" cy="1024.500" r="6" fill="none" stroke="#a8a8a8" stroke-width="2"/><circle cx="932" cy="1024.500" r="2" fill="#a8a8a8"/>
<rect x="953.500" y="1012.500" width="202" height="24" rx="5" fill="url(#d)" stroke="#222"/>
<path d="M954 1018a5 5 0 0 1 5-5h17v23h-17a5 5 0 0 1-5-5z" fill="#8a8a8a"/>
<rect x="1104" y="1013" width="28" height="23" fill="#8f8f8f"/>
<path d="M1132 1013h18a5 5 0 0 1 5 5v13a5 5 0 0 1-5 5h-18z" fill="#9a9a9a"/>
<path d="M961 1031L971 1017Q973 1015 972 1020L966 1030" stroke="#bbb" stroke-width="2" fill="none"/>
<path d="M985 1017H993L995 1020V1028L989 1032L985 1028Z" fill="#ddd" stroke="#222"/><use href="#ud" x="1005" y="1024"/>
<text x="1024" y="1030" class="w s" textLength="41" lengthAdjust="spacingAndGlyphs">Active</text><use href="#ud" x="1098" y="1024"/>
<circle cx="1117" cy="1027" r="4.500" fill="#eee" stroke="#222"/><path d="M1118 1024L1125 1015" stroke="#5a8fd8" stroke-width="3"/>
<circle cx="1143" cy="1024" r="6" fill="none" stroke="#222" stroke-width="2"/><circle cx="1143" cy="1018" r="2" fill="#fff" stroke="#222"/><circle cx="1137" cy="1028" r="2" fill="#fff" stroke="#222"/><circle cx="1149" cy="1028" r="2" fill="#fff" stroke="#222"/>
<rect x="1163.500" y="1012.500" width="47" height="24" rx="5" fill="#8a8a8a" stroke="#222"/><path d="M1187 1013V1036" stroke="#222"/>
<use href="#cam" x="1175" y="1025"/><circle cx="1182" cy="1018" r="2.500" fill="#eed25a"/>
<rect x="1191" y="1022" width="15" height="10" fill="#ccc" stroke="#222"/><path d="M1191 1021L1205 1015" stroke="#222" stroke-width="3"/>

<!-- Outliner -->
<rect x="1620" y="55" width="300" height="328" fill="#6e6e6e"/>
<path d="M1620 55V1043M1620 55H1920" stroke="#111" stroke-width="1.500"/>
<rect x="1621" y="55" width="299" height="33" fill="url(#hd)"/>
<path d="M1905 56L1920 72M1910 56L1920 67M1915 56L1920 62" stroke="#aaa" stroke-width=".8"/>
<rect x="1632.500" y="60.500" width="39" height="24" rx="5" fill="url(#d)" stroke="#222"/>
<path d="M1638 67V81M1638 72H1646M1638 80H1646" stroke="#ddd" fill="none"/><rect x="1637" y="64" width="9" height="3" fill="#e0a860"/><rect x="1647" y="70" width="8" height="3" fill="#eee"/><rect x="1647" y="78" width="8" height="3" fill="#eee"/>
<use href="#ud" x="1664" y="72.500"/>
<text x="1688" y="79" class="s" textLength="30" lengthAdjust="spacingAndGlyphs">View</text>
<text x="1744" y="79" class="s" textLength="43" lengthAdjust="spacingAndGlyphs">Search</text>
<path d="M1920 60H1809a6 6 0 0 0-6 6v13a6 6 0 0 0 6 6h111z" fill="url(#d)" stroke="#222"/>
<text x="1813" y="79" class="w s" textLength="65" lengthAdjust="spacingAndGlyphs">All Scenes</text>
<rect x="1621" y="89" width="299" height="271" fill="#727272"/>
<g fill="#6c6c6c"><rect x="1621" y="114" width="299" height="25"/><rect x="1621" y="164" width="299" height="25"/><rect x="1621" y="214" width="299" height="25"/><rect x="1621" y="264" width="299" height="25"/><rect x="1621" y="314" width="299" height="25"/></g>
<rect x="1621" y="89" width="224" height="24" fill="#7f8a93"/>
<path d="M1845 88V360M1870 88V360M1896 88V360" stroke="#5a5a5a"/>
<path d="M1638 102H1650M1658 110V177M1663 177H1675M1684 184V227M1688 227H1700M1709 235V277M1713 277H1725M1658 127H1663" stroke="#222" fill="none"/>
<use href="#exp" x="1633.500" y="102"/>
<circle cx="1659" cy="102" r="11" fill="#a0a8a8"/><use href="#scene" x="1661" y="103"/>
<text x="1674" y="107.500">Scene</text>
<use href="#col" x="1658.500" y="127"/><use href="#rl" x="1685" y="126"/><text x="1699" y="132.500">RenderLayers</text>
<rect x="1801" y="120" width="2.500" height="14" fill="#333"/>
<circle cx="1825" cy="127" r="11" fill="#8a8a8a"/><use href="#rl" x="1825" y="126"/>
<circle cx="1684" cy="152" r="11" fill="#8a96a4"/><circle cx="1684" cy="152" r="7.500" fill="#3f7ca4" stroke="#223"/><path d="M1679 149L1686 146L1689 152L1684 157L1681 153Z" fill="#6a8a50"/><text x="1699" y="157.500">World</text>
<use href="#exp" x="1658.500" y="177"/><use href="#obj" x="1684" y="177"/><text x="1699" y="182.500">base</text>
<use href="#eye" x="1858" y="177"/><use href="#cur" x="1884" y="177"/><use href="#cam" x="1908" y="177"/>
<use href="#col" x="1683.500" y="202"/><use href="#mesh" x="1709" y="201"/><text x="1724" y="207.500">base</text>
<rect x="1767" y="195" width="2.500" height="14" fill="#333"/><use href="#mat" x="1792" y="202"/>
<use href="#exp" x="1683.500" y="227"/><use href="#obj" x="1709" y="227"/><text x="1724" y="232.500">arm</text>
<use href="#eye" x="1858" y="227"/><use href="#cur" x="1884" y="227"/><use href="#cam" x="1908" y="227"/>
<use href="#col" x="1708.500" y="252"/><use href="#mesh" x="1734" y="251"/><text x="1749" y="257.500">arm</text>
<rect x="1787" y="245" width="2.500" height="14" fill="#333"/><use href="#mat" x="1812" y="252"/>
<use href="#col" x="1708.500" y="277"/><circle cx="1734" cy="277" r="11" fill="#b07c40"/><use href="#obj" x="1734" y="277"/><text x="1749" y="282.500" class="w">dish</text>
<rect x="1787" y="270" width="2.500" height="14" fill="#333"/><use href="#mesh" x="1812" y="276" opacity=".5"/>
<use href="#eye" x="1858" y="277"/><use href="#cur" x="1884" y="277"/><use href="#cam" x="1908" y="277"/>
<rect x="1621" y="360" width="299" height="23" fill="#6e6e6e"/>
<rect x="1627" y="363" width="287" height="15" rx="7.500" fill="#5c5c5c"/>
<rect x="1627" y="363" width="213" height="15" rx="7.500" fill="url(#sbh)"/>
<path d="M1621 368L1635 382M1621 373L1630 382M1621 378L1625 382" stroke="#aaa" stroke-width=".8"/>
<rect x="1620" y="382.500" width="300" height="1.500" fill="#111"/>

<!-- properties -->
<rect x="1621" y="384" width="299" height="656" fill="#727272"/>
<rect x="1621" y="384" width="299" height="33" fill="url(#hd)"/>
<path d="M1905 385L1920 400M1910 385L1920 395M1915 385L1920 390" stroke="#aaa" stroke-width=".8"/>
<path d="M1621 416.500H1920" stroke="#5c5c5c"/>
<rect x="1632.500" y="389.500" width="39" height="24" rx="5" fill="url(#d)" stroke="#222"/>
<rect x="1638" y="394" width="17" height="5" rx="2" fill="#eee"/><rect x="1638" y="404" width="17" height="5" rx="2" fill="#bbb" stroke="#eee"/><use href="#ud" x="1664" y="401.500"/>
<path d="M1920 388.500H1689a6 6 0 0 0-6 6v13a6 6 0 0 0 6 6h231z" fill="#4a4a4a" stroke="#222"/>
<path d="M1707 389V413M1732 389V413M1756 389V413M1782 389V413M1807 389V413M1832 389V413M1857 389V413M1882 389V413M1907 389V413" stroke="#222"/>
<rect x="1832" y="389" width="25" height="24" fill="#5680c2"/>
<use href="#cam" x="1695" y="401" opacity=".75"/><use href="#rl" x="1719" y="401" opacity=".8"/><use href="#scene" x="1745" y="402" opacity=".8"/>
<circle cx="1769" cy="401" r="7.500" fill="#4a7ea8" stroke="#222"/><path d="M1766 397L1771 396L1773 401L1769 404Z" fill="#7a9a50"/>
<use href="#cube" x="1794" y="401" opacity=".85"/>
<path d="M1813 406L1818 401M1820 399L1825 394" stroke="#ccc" stroke-width="2"/><rect x="1809" y="401" width="10" height="6" rx="3" transform="rotate(-40 1814 404)" fill="none" stroke="#ccc" stroke-width="1.500"/><rect x="1819" y="394" width="10" height="6" rx="3" transform="rotate(-40 1824 397)" fill="none" stroke="#ccc" stroke-width="1.500"/>
<path d="M1837 409L1848 398M1846 394Q1852 392 1853 396L1849 399L1851 401L1854 398Q1855 403 1849 403" stroke="#eaf0fa" stroke-width="2.500" fill="none"/>
<use href="#mesh" x="1869" y="401" opacity=".6"/><use href="#mat" x="1894" y="401" opacity=".8"/>
<rect x="1910" y="393" width="10" height="15" fill="#a06a5c"/><rect x="1910" y="393" width="5" height="5" fill="#d8c8b0"/><rect x="1915" y="398" width="5" height="5" fill="#d8c8b0"/><rect x="1910" y="403" width="5" height="5" fill="#d8c8b0"/>
<path d="M1636 451L1643 443" stroke="#222" stroke-width="1.500"/><path d="M1640 436L1652 444M1645 433L1654 440" stroke="#eee" stroke-width="2.500"/><path d="M1641 441L1649 447" stroke="#ddd" stroke-width="3"/>
<use href="#scene" x="1670" y="438"/>
<path d="M1686 434L1691 438.500L1686 443Z" fill="#444"/>
<use href="#cube" x="1719" y="439"/>
<text x="1736" y="445">dish</text>
<rect x="1631.500" y="472.500" width="278" height="24" rx="5" fill="url(#d)" stroke="#222"/>
<text x="1640" y="490" class="w" textLength="80" lengthAdjust="spacingAndGlyphs">Add Modifier</text><use href="#ud" x="1902" y="485"/>
<rect x="0" y="1040" width="1920" height="3" fill="#0e0f12"/>
<path d="M1616 1030L1622 1040M1612 1034L1618 1040" stroke="#aaa" stroke-width=".8"/>
</svg>
</body></html>
